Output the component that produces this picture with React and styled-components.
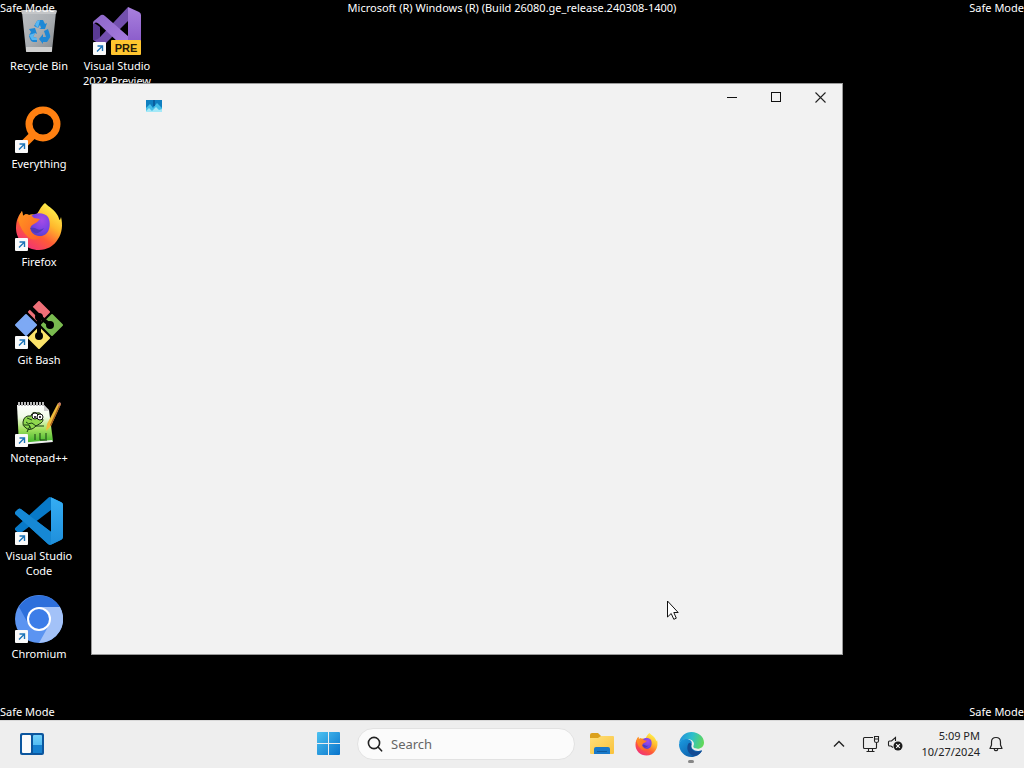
import React from "react";
import styled, { createGlobalStyle } from "styled-components";

const GlobalStyle = createGlobalStyle`
  * { box-sizing: border-box; }
  body {
    margin: 0;
    background: #000;
    font-family: "Noto Sans", "Open Sans", sans-serif;
    font-size: 11px;
  }
  button, input { font: inherit; color: inherit; }
  button { border: 0; padding: 0; background: none; }
  svg { display: block; }
`;

const Screen = styled.div`
  display: flex;
  flex-direction: column;
  min-height: 100vh;
  background: #000;
`;

const Desktop = styled.main`
  position: relative;
  flex: 1;
  overflow: hidden;
`;

const Watermark = styled.span`
  position: absolute;
  ${(p) => (p.$bottom ? "bottom: 0;" : "top: 0;")}
  ${(p) => (p.$align === "left" ? "left: 0;" : "")}
  ${(p) => (p.$align === "right" ? "right: 0;" : "")}
  ${(p) => (p.$align === "center" ? "left: 0; right: 0; text-align: center;" : "")}
  line-height: 16px;
  color: #fff;
  white-space: nowrap;
  pointer-events: none;
`;

const ShortcutGrid = styled.div`
  display: grid;
  grid-auto-flow: column;
  grid-template-rows: repeat(7, 98px);
  grid-auto-columns: 78px;
`;

const ShortcutButton = styled.button`
  display: flex;
  flex-direction: column;
  align-items: center;
  gap: 3px;
  padding: 7px 0 0;
  color: #fff;
  line-height: 15px;
  text-align: center;
`;

const ShortcutArt = styled.span`
  position: relative;
  width: 48px;
  height: 48px;
`;

const ShortcutName = styled.span`
  max-width: 74px;
`;

const ArrowBadge = styled.svg`
  position: absolute;
  left: 0;
  bottom: 0;
`;

const AppWindow = styled.section`
  position: absolute;
  left: 91px;
  top: 83px;
  width: 752px;
  height: 572px;
  background: #f2f2f2;
  border: 1px solid #9a9a9a;
`;

const TitleBar = styled.header`
  display: flex;
  justify-content: space-between;
  align-items: flex-start;
  padding-left: 54px;
`;

const TitleIcon = styled.span`
  padding-top: 16px;
`;

const CaptionButtons = styled.div`
  display: flex;
`;

const CaptionButton = styled.button`
  display: grid;
  place-items: center;
  width: 44px;
  height: 27px;
`;

const Pointer = styled.svg`
  position: absolute;
  left: 667px;
  top: 600px;
  pointer-events: none;
`;

const Taskbar = styled.footer`
  display: grid;
  grid-template-columns: 1fr auto 1fr;
  align-items: center;
  height: 48px;
  background: #eee;
  box-shadow: inset 0 1px #d8d8d8;
`;

const TaskLeft = styled.div`
  padding-left: 9px;
`;

const TaskCenter = styled.nav`
  display: flex;
  align-items: center;
  padding-right: 4px;
`;

const TaskButton = styled.button`
  position: relative;
  display: grid;
  place-items: center;
  width: 45px;
  height: 46px;
`;

const RunningMark = styled.span`
  position: absolute;
  bottom: 4px;
  left: 19px;
  width: 6px;
  height: 3px;
  border-radius: 2px;
  background: #868686;
`;

const SearchBox = styled.label`
  display: flex;
  align-items: center;
  gap: 8px;
  width: 218px;
  height: 32px;
  margin: 0 4px 0 6px;
  padding: 0 9px;
  border: 1px solid #e2e2e2;
  border-radius: 16px;
  background: #fbfbfb;
`;

const SearchInput = styled.input`
  flex: 1;
  min-width: 0;
  padding: 0;
  border: 0;
  outline: 0;
  background: none;
  font-size: 13px;
  &::placeholder { color: #666; opacity: 1; }
`;

const Tray = styled.div`
  display: flex;
  justify-content: flex-end;
  align-items: center;
  padding-right: 16px;
`;

const TrayButton = styled.button`
  display: grid;
  place-items: center;
  width: ${(p) => p.$width || 24}px;
  height: 40px;
  color: #222;
`;

const Clock = styled.button`
  padding: 0 4px 0 14px;
  color: #222;
  line-height: 16px;
  text-align: right;
`;

const RecycleBin = () => (
  <svg width="48" height="48" viewBox="0 0 48 48">
    <defs>
      <linearGradient id="bin" x1="0" x2="1" y1="0" y2="1">
        <stop offset="0" stopColor="#b9bdc1" />
        <stop offset="0.5" stopColor="#aaaeb2" />
        <stop offset="1" stopColor="#85898d" />
      </linearGradient>
    </defs>
    <path d="M7 5H41L37 44Q37 45 36 45H12Q11 45 11 44Z" fill="url(#bin)" />
    <path d="M6 4Q6 3 8 3H40Q42 3 42 4L41 7H7Z" fill="#c4c6c8" />
    <path d="M11 40H37L37 44Q37 45 36 45H12Q11 45 11 44Z" fill="#d0d0d0" />
    <g fill="#1e88d6">
      <path d="M19 19L22 14Q23 13 25 13H28L30 17L32 16L30 22H24L26 21L25 18L23 21Z" />
      <path d="M14 22L20 21L22 27L20 26L18 30L22 31V35H18Q16 35 15 32L14 29Q14 28 16 25Z" />
      <path d="M29 24L33 22L35 28Q36 30 34 32L32 35H28V37L24 32L28 27V30H31Z" />
    </g>
    <path d="M20 18L22 14L25 13L23 21ZM14 28L20 26L18 30L22 31V33H17Z" fill="#58b7f2" />
  </svg>
);

const VisualStudio = () => (
  <svg width="48" height="48" viewBox="0 0 48 48">
    <defs>
      <linearGradient id="vsr" x1="0" x2="0" y1="0" y2="1">
        <stop offset="0" stopColor="#a981de" />
        <stop offset="1" stopColor="#8a5bca" />
      </linearGradient>
      <linearGradient id="vsb" x1="0" x2="1" y1="0" y2="1">
        <stop offset="0" stopColor="#8d68c8" />
        <stop offset="1" stopColor="#a77be0" />
      </linearGradient>
    </defs>
    <path d="M0 15L7 20V31L14 35L10 39L0 33Z" fill="#5a3a94" />
    <path d="M35 0L36 13L13 36Q9 39 5 36L1 33Q5 33 8 29Z" fill="#7350ae" />
    <path d="M0 16Q0 14 2 13L8 8Q10 7 12 9L36 30V37L32 38Q29 38 26 36L6 17Q3 14 0 17Z" fill="url(#vsb)" />
    <path d="M35 0L46 5Q48 6 48 8V36H35Z" fill="url(#vsr)" />
    <rect x="18" y="33" width="30" height="15" rx="1" fill="#ffc52f" />
    <text x="33" y="45" textAnchor="middle" fontFamily="Liberation Sans, sans-serif" fontSize="11" fontWeight="700" fill="#261b08">PRE</text>
  </svg>
);

const Everything = () => (
  <svg width="48" height="48" viewBox="0 0 48 48" fill="none" stroke="#ff8011">
    <path d="M19 29L10 38" strokeWidth="8" />
    <circle cx="28" cy="19" r="14" strokeWidth="7" />
  </svg>
);

const Firefox = ({ size, id }) => (
  <svg width={size} height={size} viewBox="0 0 48 48">
    <defs>
      <linearGradient id={`${id}a`} x1="0.8" x2="0.2" y1="0.05" y2="0.95">
        <stop offset="0" stopColor="#fff44f" />
        <stop offset="0.35" stopColor="#ffb72c" />
        <stop offset="0.65" stopColor="#ff5b36" />
        <stop offset="1" stopColor="#f0307a" />
      </linearGradient>
      <radialGradient id={`${id}b`} cx="0.6" cy="0.3" r="0.8">
        <stop offset="0" stopColor="#a64be5" />
        <stop offset="0.6" stopColor="#7542e5" />
        <stop offset="1" stopColor="#4a3fc0" />
      </radialGradient>
      <linearGradient id={`${id}c`} x1="0" x2="1" y1="0" y2="1">
        <stop offset="0" stopColor="#ff9a1f" />
        <stop offset="1" stopColor="#ff5a2a" />
      </linearGradient>
    </defs>
    <path d="M30 0C34 4 40 7 43 13C44 15 44 17 45 17L46 14C48 22 47 30 43 36C39 43 32 47 24 47C11 47 1 37 1 25C1 18 3 13 7 8L8 13C10 11 11 11 14 12C16 11 18 11 21 12C24 9 25 4 30 0Z" fill={`url(#${id}a)`} />
    <path d="M15 14C20 9 29 9 33 14C36 19 35 28 31 31C26 35 18 34 15 29Z" fill={`url(#${id}b)`} />
    <path d="M3 17Q5 11 7 8L8 13Q11 10 14 12Q17 12 19 15L25 16Q22 20 19 21Q14 23 16 28Q19 34 28 33Q22 39 14 35Q6 28 3 17Z" fill={`url(#${id}c)`} />
    <path d="M15 25Q19 24 22 26Q25 28 29 25Q25 31 20 30Q17 29 15 25Z" fill="#5038b8" />
  </svg>
);

const GitBash = () => (
  <svg width="48" height="48" viewBox="0 0 48 48">
    <g strokeLinejoin="round" strokeWidth="2">
      <path d="M24 1L34 11L24 21L14 11Z" fill="#ef7078" stroke="#ef7078" />
      <path d="M1 24L11 14L21 24L11 34Z" fill="#7da9f4" stroke="#7da9f4" />
      <path d="M47 24L37 14L27 24L37 34Z" fill="#7abb50" stroke="#7abb50" />
      <path d="M24 47L34 37L24 27L14 37Z" fill="#fbe36a" stroke="#fbe36a" />
    </g>
    <path d="M15 6L24 15L35 24M24 15V35" stroke="#000" strokeWidth="4" fill="none" />
    <circle cx="24" cy="16" r="4" />
    <circle cx="35" cy="24" r="4" />
    <circle cx="24" cy="35" r="4" />
  </svg>
);

const Notepad = () => (
  <svg width="48" height="48" viewBox="0 0 48 48">
    <defs>
      <linearGradient id="npp" x1="0" x2="0" y1="0" y2="1">
        <stop offset="0" stopColor="#fff" />
        <stop offset="0.3" stopColor="#f1fbe8" />
        <stop offset="0.6" stopColor="#a5e260" />
        <stop offset="1" stopColor="#2fae20" />
      </linearGradient>
    </defs>
    <path d="M2 6H29L34 11L38 42L4 46Z" fill="url(#npp)" />
    <path d="M29 6L34 12L29 12Z" fill="#ccc" />
    <path d="M37 41L38 43L4 46V44Z" fill="#eee" />
    <path d="M3 5H30" stroke="#bbb" strokeWidth="4" strokeDasharray="2 1" />
    <path d="M8 23Q9 16 16 17Q17 12 22 14Q27 13 26 18Q30 21 26 24L21 27Q15 33 11 29Q7 27 8 23Z" fill="#8fd84e" stroke="#1d3413" strokeWidth="1" />
    <circle cx="20" cy="17" r="3" fill="#fff" stroke="#111" />
    <circle cx="25" cy="18" r="3" fill="#fff" stroke="#111" />
    <circle cx="20" cy="18" r="1" />
    <circle cx="25" cy="18" r="1" />
    <path d="M11 23Q13 26 17 24L21 27H29M15 27L12 33M20 35V41M25 34V41H32M31 34V40M12 19L17 21M9 26H14L16 30" fill="none" stroke="#173d13" strokeWidth="1" />
    <path d="M43 4L46 5L36 27L31 32L32 25Z" fill="#f0bd3c" />
    <path d="M45 4L46 5L36 27L35 26Z" fill="#a96020" />
    <path d="M44 3L46 4L45 7L43 6Z" fill="#c27b70" />
  </svg>
);

const VSCode = () => (
  <svg width="48" height="48" viewBox="0 0 24 24">
    <defs>
      <linearGradient id="code" x1="0" x2="0" y1="0" y2="1">
        <stop offset="0" stopColor="#35adf3" />
        <stop offset="1" stopColor="#1f8fdb" />
      </linearGradient>
    </defs>
    <path fill="#087ac8" d="M23.15 2.587L18.21.21a1.494 1.494 0 0 0-1.705.29l-9.46 8.63-4.12-3.128a.999.999 0 0 0-1.276.057L.327 7.261A1 1 0 0 0 .326 8.74L3.899 12 .326 15.26a1 1 0 0 0 .001 1.479L1.65 17.94a.999.999 0 0 0 1.276.057l4.12-3.128 9.46 8.63a1.492 1.492 0 0 0 1.704.29l4.942-2.377A1.5 1.5 0 0 0 24 20.06V3.939a1.5 1.5 0 0 0-.85-1.352zm-5.146 14.861L10.826 12l7.178-5.448v10.896z" />
    <path d="M2.9 6L18 17.4V23.9Q17 24 16.5 23.5L.33 8.74Q-.3 8 .33 7.26L1.65 6.06Q2.3 5.6 2.9 6Z" fill="#1688d4" />
    <path d="M18 .2L18.2.21L23.15 2.59Q24 3 24 3.94V20.06Q24 21 23.15 21.4L18.2 23.8H18Z" fill="url(#code)" />
  </svg>
);

const Chromium = () => (
  <svg width="48" height="48" viewBox="0 0 48 48">
    <circle cx="24" cy="24" r="24" fill="#5b94f1" />
    <path d="M24 12H45A24 24 0 0 1 24 48L34 30Z" fill="#a3c2f8" />
    <path d="M4 12A24 24 0 0 1 45 12H24L14 30Z" fill="#2d6fdb" />
    <circle cx="24" cy="24" r="12" fill="#fff" />
    <circle cx="24" cy="24" r="10" fill="#3c7de8" />
  </svg>
);

const Widgets = () => (
  <svg width="24" height="22" viewBox="0 0 24 22">
    <defs>
      <linearGradient id="wid" x1="0" x2="0" y1="0" y2="1">
        <stop offset="0" stopColor="#72d1fb" />
        <stop offset="0.55" stopColor="#54bdf2" />
        <stop offset="1" stopColor="#1784d5" />
      </linearGradient>
    </defs>
    <rect width="24" height="22" rx="2" fill="#0c569e" />
    <rect x="2" y="2" width="9" height="18" rx="1" fill="#fbfbfb" />
    <rect x="13" y="2" width="9" height="18" rx="1" fill="url(#wid)" />
    <path d="M13 12H22V19Q22 20 21 20H14Q13 20 13 19Z" fill="#1681d0" />
  </svg>
);

const StartLogo = () => (
  <svg width="24" height="24" viewBox="0 0 24 24">
    <defs>
      <linearGradient id="win" x1="0" x2="1" y1="0" y2="1" gradientUnits="objectBoundingBox">
        <stop offset="0" stopColor="#4cc2f1" />
        <stop offset="1" stopColor="#0873cb" />
      </linearGradient>
    </defs>
    <path d="M1 0H11V11H0V1Q0 0 1 0ZM12 0H22Q23 0 23 1V11H12ZM0 12H11V23H1Q0 23 0 22ZM12 12H23V22Q23 23 22 23H12Z" fill="url(#win)" />
  </svg>
);

const Explorer = () => (
  <svg width="26" height="24" viewBox="0 0 26 24">
    <defs>
      <linearGradient id="fold" x1="0" x2="1" y1="0" y2="1">
        <stop offset="0" stopColor="#ffe07a" />
        <stop offset="1" stopColor="#f9c23c" />
      </linearGradient>
    </defs>
    <path d="M1 3Q1 1 3 1H9L12 4V8H1Z" fill="#dba11d" />
    <path d="M1 6H9L12 4H24Q25 4 25 5V21Q25 22 24 22H2Q1 22 1 21Z" fill="url(#fold)" />
    <path d="M5 22V17Q5 15 7 15H19Q21 15 21 17V22Z" fill="#1979c9" />
    <path d="M8 19H18V20H8Z" fill="#0f5b9f" />
  </svg>
);

const Edge = () => (
  <svg width="25" height="25" viewBox="0 0 24 24">
    <defs>
      <linearGradient id="edt" x1="0" x2="1" y1="0.3" y2="0.5">
        <stop offset="0" stopColor="#238fdb" />
        <stop offset="0.5" stopColor="#2cbfcb" />
        <stop offset="1" stopColor="#61d858" />
      </linearGradient>
      <linearGradient id="edb" x1="0" x2="1" y1="0" y2="1">
        <stop offset="0" stopColor="#1b9de2" />
        <stop offset="1" stopColor="#0b4f9d" />
      </linearGradient>
    </defs>
    <path d="M0 11C1 4 6 0 12 0C19 0 24 5 24 10C24 14 21 16 18 16C15 16 13 15 14 13C15 11 14 8 10 7C6 6 2 8 0 11Z" fill="url(#edt)" />
    <path d="M0 12C1 7 6 6 9 7C12 8 13 10 12 12C11 16 15 19 20 18C21 18 22 17 22 18C20 22 16 24 12 24C5 24 0 18 0 12Z" fill="url(#edb)" />
    <path d="M9 11C6 17 10 22 15 23C19 22 21 20 22 18C16 21 10 17 12 12Q11 9 9 11Z" fill="#134b93" />
  </svg>
);

const SHORTCUTS = [
  { name: "Recycle Bin", Art: RecycleBin },
  { name: "Everything", Art: Everything, linked: true },
  { name: "Firefox", Art: () => <Firefox size={48} id="ffd" />, linked: true },
  { name: "Git Bash", Art: GitBash, linked: true },
  { name: "Notepad++", Art: Notepad, linked: true },
  { name: "Visual Studio Code", Art: VSCode, linked: true },
  { name: "Chromium", Art: Chromium, linked: true },
  { name: "Visual Studio 2022 Preview", Art: VisualStudio, linked: true },
];

function Shortcut({ name, Art, linked }) {
  return (
    <ShortcutButton type="button">
      <ShortcutArt>
        <Art />
        {linked && (
          <ArrowBadge width="13" height="13" viewBox="0 0 13 13">
            <rect width="13" height="13" rx="1" fill="#fafafa" />
            <path d="M4 9.5L9 4.5M4.5 4H9.5V9" fill="none" stroke="#1c74b8" strokeWidth="1.4" />
          </ArrowBadge>
        )}
      </ShortcutArt>
      <ShortcutName>{name}</ShortcutName>
    </ShortcutButton>
  );
}

export default function App() {
  return (
    <Screen>
      <GlobalStyle />
      <Desktop>
        <ShortcutGrid>
          {SHORTCUTS.map((s) => (
            <Shortcut key={s.name} {...s} />
          ))}
        </ShortcutGrid>
        <Watermark $align="left">Safe Mode</Watermark>
        <Watermark $align="center">Microsoft (R) Windows (R) (Build 26080.ge_release.240308-1400)</Watermark>
        <Watermark $align="right">Safe Mode</Watermark>
        <Watermark $bottom $align="left">Safe Mode</Watermark>
        <Watermark $bottom $align="right">Safe Mode</Watermark>
        <AppWindow>
          <TitleBar>
            <TitleIcon>
              <svg width="16" height="12" viewBox="0 0 16 12">
                <rect width="16" height="12" fill="#0f7fc0" />
                <path d="M0 8L4 4L7 8L11 3L16 8V12H0Z" fill="#45bfe8" />
                <path d="M0 11L3 8L6 11L10 7L13 10L16 9V12H0Z" fill="#a3e8f7" />
                <path d="M7 0H9V6H7Z" fill="#0a5f9e" />
              </svg>
            </TitleIcon>
            <CaptionButtons>
              <CaptionButton type="button" aria-label="Minimize">
                <svg width="11" height="11" viewBox="0 0 11 11">
                  <path d="M0 5.5H10" stroke="#111" />
                </svg>
              </CaptionButton>
              <CaptionButton type="button" aria-label="Maximize">
                <svg width="11" height="11" viewBox="0 0 11 11">
                  <rect x="0.5" y="0.5" width="9" height="9" fill="none" stroke="#111" />
                </svg>
              </CaptionButton>
              <CaptionButton type="button" aria-label="Close">
                <svg width="11" height="11" viewBox="0 0 11 11">
                  <path d="M0.5 0.5L10.5 10.5M10.5 0.5L0.5 10.5" stroke="#222" strokeWidth="1.1" />
                </svg>
              </CaptionButton>
            </CaptionButtons>
          </TitleBar>
        </AppWindow>
        <Pointer width="13" height="21" viewBox="0 0 13 21">
          <path d="M0.5 1V17L4.2 13.5L6.8 19.3L9.3 18.2L6.8 12.5H11.2Z" fill="#fff" stroke="#111" />
        </Pointer>
      </Desktop>
      <Taskbar>
        <TaskLeft>
          <TaskButton type="button" aria-label="Widgets">
            <Widgets />
          </TaskButton>
        </TaskLeft>
        <TaskCenter>
          <TaskButton type="button" aria-label="Start">
            <StartLogo />
          </TaskButton>
          <SearchBox>
            <svg width="16" height="16" viewBox="0 0 16 16" fill="none" stroke="#222" strokeWidth="1.6" strokeLinecap="round">
              <circle cx="7" cy="7" r="5.6" />
              <path d="M11 11L14.6 14.8" />
            </svg>
            <SearchInput type="text" placeholder="Search" aria-label="Search" />
          </SearchBox>
          <TaskButton type="button" aria-label="File Explorer">
            <Explorer />
          </TaskButton>
          <TaskButton type="button" aria-label="Firefox">
            <Firefox size={23} id="fft" />
          </TaskButton>
          <TaskButton type="button" aria-label="Edge">
            <Edge />
            <RunningMark />
          </TaskButton>
        </TaskCenter>
        <Tray>
          <TrayButton type="button" aria-label="Show hidden icons" $width={40}>
            <svg width="12" height="8" viewBox="0 0 12 8">
              <path d="M1 6.5L6 1.5L11 6.5" fill="none" stroke="#222" strokeWidth="1.4" />
            </svg>
          </TrayButton>
          <TrayButton type="button" aria-label="Network">
            <svg width="18" height="18" viewBox="0 0 18 18" fill="none" stroke="#222" strokeWidth="1.1">
              <path d="M11 2.5H2.5Q1.5 2.5 1.5 3.5V12.5Q1.5 13.5 2.5 13.5H13.5Q14.5 13.5 14.5 12.5V9M6.5 13.5V16M10.5 13.5V16M4.5 16.5H12.5" />
              <path d="M12.5 1.5H16.5V6Q16.5 7.5 14.5 7.5Q12.5 7.5 12.5 6ZM12.5 4H16.5M14.5 7.5V10" />
            </svg>
          </TrayButton>
          <TrayButton type="button" aria-label="Volume">
            <svg width="16" height="16" viewBox="0 0 16 16">
              <path d="M6 11.5L4 10H2.5Q1.5 10 1.5 9V6Q1.5 5 2.5 5H4.5L8.5 1.5V5" fill="none" stroke="#222" strokeWidth="1.1" />
              <circle cx="11" cy="10" r="4.5" fill="#1c1c1c" />
              <path d="M9.2 8.2L12.8 11.8M12.8 8.2L9.2 11.8" stroke="#fff" strokeWidth="1.1" />
            </svg>
          </TrayButton>
          <Clock type="button">
            5:09 PM
            <br />
            10/27/2024
          </Clock>
          <TrayButton type="button" aria-label="Notifications">
            <svg width="16" height="16" viewBox="0 0 16 16" fill="none" stroke="#222" strokeWidth="1.2" strokeLinejoin="round">
              <path d="M8 1.5Q12.5 1.5 12.5 6V9L14 12.5H2L3.5 9V6Q3.5 1.5 8 1.5ZM6 12.5Q6.3 14.7 8 14.7Q9.7 14.7 10 12.5" />
            </svg>
          </TrayButton>
        </Tray>
      </Taskbar>
    </Screen>
  );
}
